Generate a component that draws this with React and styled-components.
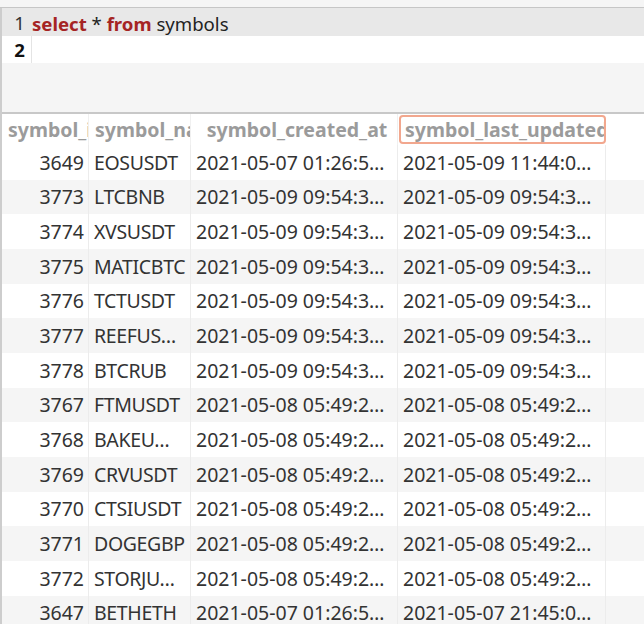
import React from "react";
import styled, { createGlobalStyle } from "styled-components";

const FONT = `"Noto Sans", "Open Sans", sans-serif`;

const Global = createGlobalStyle`
  html, body {
    margin: 0;
    padding: 0;
    background: #ffffff;
    font-family: ${FONT};
    overflow: hidden;
  }
`;

const rows = [
  ["3649", "EOSUSDT", "2021-05-07 01:26:5…", "2021-05-09 11:44:0…"],
  ["3773", "LTCBNB", "2021-05-09 09:54:3…", "2021-05-09 09:54:3…"],
  ["3774", "XVSUSDT", "2021-05-09 09:54:3…", "2021-05-09 09:54:3…"],
  ["3775", "MATICBTC", "2021-05-09 09:54:3…", "2021-05-09 09:54:3…"],
  ["3776", "TCTUSDT", "2021-05-09 09:54:3…", "2021-05-09 09:54:3…"],
  ["3777", "REEFUS…", "2021-05-09 09:54:3…", "2021-05-09 09:54:3…"],
  ["3778", "BTCRUB", "2021-05-09 09:54:3…", "2021-05-09 09:54:3…"],
  ["3767", "FTMUSDT", "2021-05-08 05:49:2…", "2021-05-08 05:49:2…"],
  ["3768", "BAKEU…", "2021-05-08 05:49:2…", "2021-05-08 05:49:2…"],
  ["3769", "CRVUSDT", "2021-05-08 05:49:2…", "2021-05-08 05:49:2…"],
  ["3770", "CTSIUSDT", "2021-05-08 05:49:2…", "2021-05-08 05:49:2…"],
  ["3771", "DOGEGBP", "2021-05-08 05:49:2…", "2021-05-08 05:49:2…"],
  ["3772", "STORJU…", "2021-05-08 05:49:2…", "2021-05-08 05:49:2…"],
  ["3647", "BETHETH", "2021-05-07 01:26:5…", "2021-05-07 21:45:0…"],
];

const headers = ["symbol_id", "symbol_name", "symbol_created_at", "symbol_last_updated"];

const COLS = "87px 102px 207px 208px 1fr";

const Page = styled.div`
  width: 644px;
  height: 624px;
  overflow: hidden;
  display: flex;
  flex-direction: column;
  background: #f5f5f5;
`;

const TabStrip = styled.div`
  height: 7px;
  overflow: hidden;
  background: #f5f5f5;
  border-bottom: 1px solid #c6c6c6;
`;

const TabLabel = styled.div`
  margin: -24px 0 0 338px;
  font-size: 18px;
  line-height: 24px;
  color: #a0a0a0;
  white-space: nowrap;
`;

const Panel = styled.div`
  flex: 1;
  display: flex;
  flex-direction: column;
  border-left: 2px solid #cdcdcd;
  min-height: 0;
`;

const Editor = styled.div`
  background: #f5f5f5;
  height: 104px;
  border-bottom: 2px solid #c8c8c8;
`;

const CodeLine = styled.div`
  display: flex;
  height: ${(p) => p.h}px;
  background: ${(p) => (p.active ? "#e8e8e8" : "#ffffff")};
  font-size: 18.6px;
  align-items: center;
`;

const Gutter = styled.div`
  width: 23px;
  padding-right: 6px;
  color: ${(p) => (p.bold ? "#111" : "#333")};
  font-weight: ${(p) => (p.bold ? 700 : 400)};
  border-right: 1px solid ${(p) => (p.active ? "#e8e8e8" : "#e4e4e4")};
  height: 100%;
  display: flex;
  align-items: center;
  justify-content: flex-end;
  background: ${(p) => (p.active ? "#e8e8e8" : "#ffffff")};
`;

const Code = styled.div`
  color: #222;
  white-space: pre;
  padding-top: 2px;
`;

const Kw = styled.span`
  color: #a52424;
  font-weight: 700;
`;

const Grid = styled.div`
  flex: 1;
  background: #ffffff;
  overflow: hidden;
`;

const Row = styled.div`
  display: grid;
  grid-template-columns: ${COLS};
  height: ${(p) => p.h}px;
  background: ${(p) => (p.alt ? "#f5f5f5" : "#ffffff")};
`;

const HeadCell = styled.div`
  padding: 0 0 0 6px;
  line-height: ${(p) => (p.focused ? 25 : 31)}px;
  text-align: center;
  font-size: 19.5px;
  font-weight: 700;
  color: #9b9b9b;
  white-space: nowrap;
  overflow: hidden;
  border-right: ${(p) => (p.last ? "none" : "1px solid #f0f0f0")};
  ${(p) =>
    p.focused &&
    `
    border: 2px solid #f2a78e;
    border-radius: 4px;
    margin: 1px 0 1px 1px;
    padding-left: 4px;
  `}
`;

const Cell = styled.div`
  display: flex;
  align-items: center;
  justify-content: ${(p) => (p.right ? "flex-end" : "flex-start")};
  padding: 0 ${(p) => (p.right ? 4 : 0)}px 0 5px;
  font-size: 19.5px;
  letter-spacing: ${(p) => (p.tight ? "-0.35px" : "0")};
  color: #333333;
  white-space: nowrap;
  overflow: hidden;
  border-right: ${(p) => (p.last ? "none" : "1px solid #ececec")};
`;

export default function App() {
  return (
    <Page>
      <Global />
      <TabStrip>
        <TabLabel>symbols (query)</TabLabel>
      </TabStrip>
      <Panel>
        <Editor>
          <CodeLine active h={28}>
            <Gutter active>1</Gutter>
            <Code>
              <Kw>select</Kw> * <Kw>from</Kw> symbols
            </Code>
          </CodeLine>
          <CodeLine h={27}>
            <Gutter bold>2</Gutter>
            <Code />
          </CodeLine>
        </Editor>
        <Grid>
          <Row h={31}>
            {headers.map((h, i) => (
              <HeadCell key={h} focused={i === 3}>
                {h}
              </HeadCell>
            ))}
            <HeadCell last />
          </Row>
          {rows.map((r, i) => (
            <Row key={i} alt={i % 2 === 1} h={34.67}>
              <Cell right>{r[0]}</Cell>
              <Cell tight>{r[1]}</Cell>
              <Cell>{r[2]}</Cell>
              <Cell>{r[3]}</Cell>
              <Cell last />
            </Row>
          ))}
        </Grid>
      </Panel>
    </Page>
  );
}
